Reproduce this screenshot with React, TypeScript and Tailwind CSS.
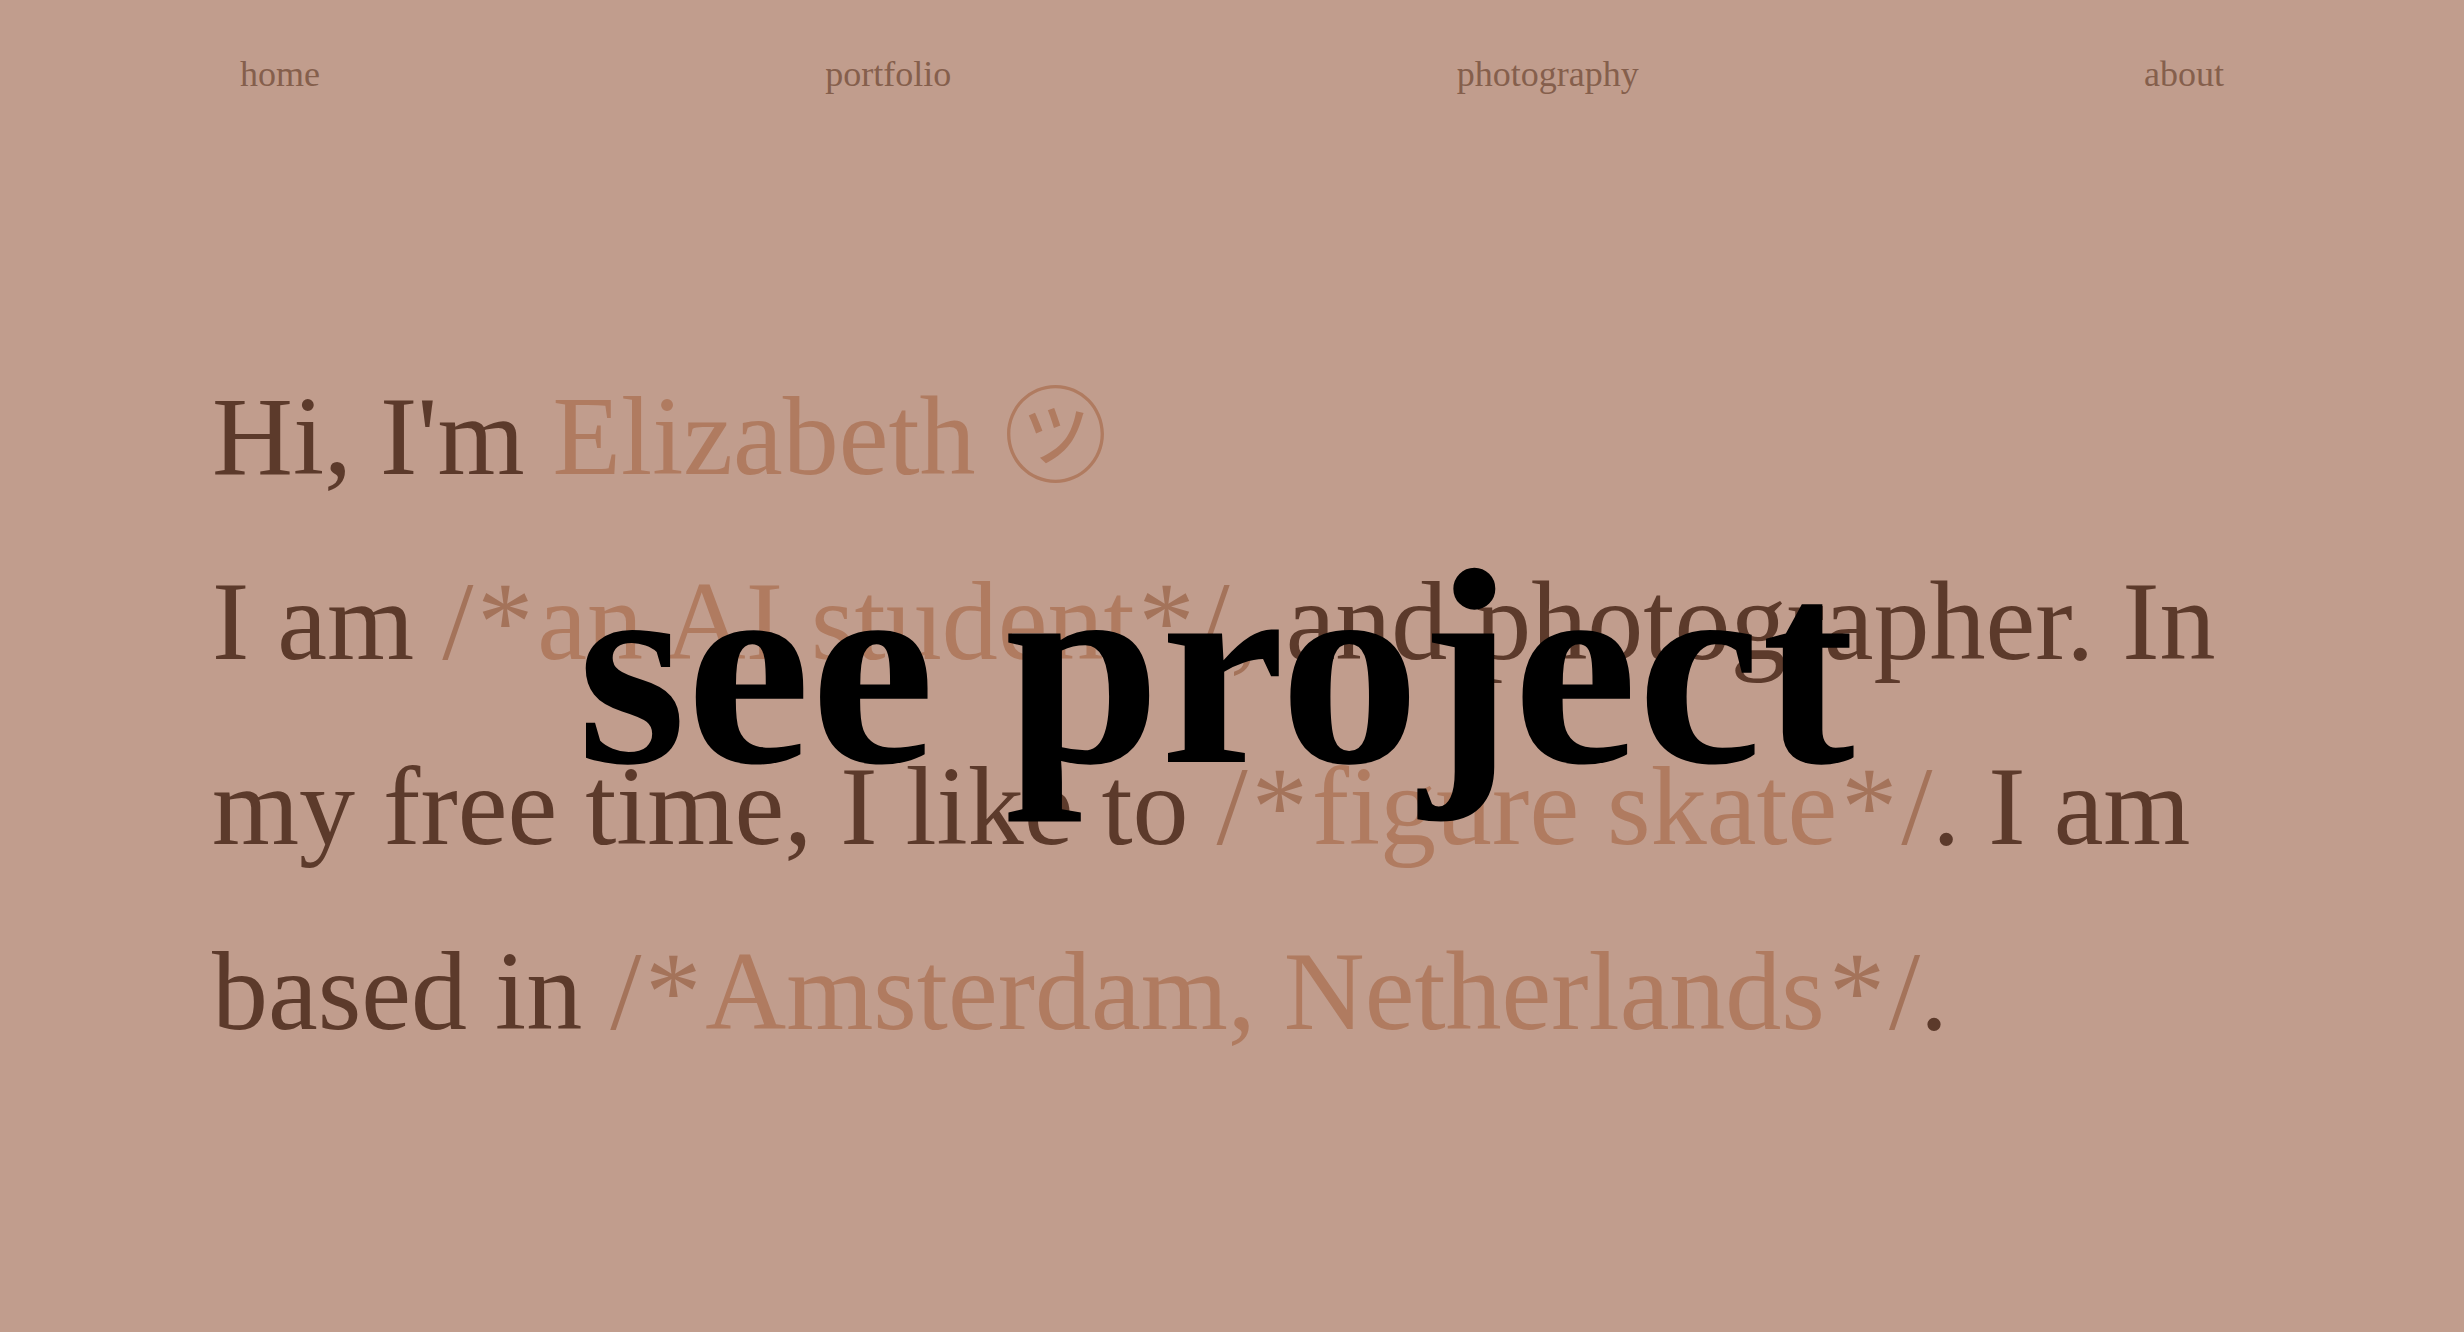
import type { ReactNode } from "react";

const links = ["home", "portfolio", "photography", "about"];

function Accent({ children }: { children: ReactNode }) {
  return <span className="text-[#b07b60]">{children}</span>;
}

function Comment({ children, tail }: { children: ReactNode; tail?: string }) {
  return (
    <span className="text-[#a4735a]">
      /<span className="px-1">*</span>
      <Accent>{children}</Accent>
      <span className="px-1">*</span>/{tail}
    </span>
  );
}

export default function App() {
  return (
    <div className="relative flex min-h-screen flex-col overflow-hidden bg-[#c19d8d] font-['Liberation_Serif','Noto_Sans_CJK_JP',serif]">
      <nav className="flex justify-between px-[240px] pt-[52px] text-4xl/[44px] text-[#855f4c]">
        {links.map((link) => (
          <a key={link} href={`#${link}`}>
            {link}
          </a>
        ))}
      </nav>

      <main className="flex flex-1 flex-col justify-center px-[212px]">
        <h1 className="text-[112px]/[185px] whitespace-nowrap text-[#5c3a2b]">
          <span className="block">
            Hi, I'm{" "}
            <Accent>
              Elizabeth <span className="text-[104px]/none">㋡</span>
            </Accent>
          </span>
          <span className="block">
            I am <Comment tail=",">an AI student</Comment> and photographer. In
          </span>
          <span className="block">
            my free time, I like to <Comment>figure skate</Comment>. I am
          </span>
          <span className="block">
            based in <Comment>Amsterdam, Netherlands</Comment>.
          </span>
        </h1>
      </main>

      <div className="pointer-events-none absolute inset-0 flex items-center justify-center pt-1 pr-8">
        <a
          href="#project"
          className="pointer-events-auto text-[280px]/[320px] font-bold whitespace-nowrap text-black"
        >
          see project
        </a>
      </div>
    </div>
  );
}
